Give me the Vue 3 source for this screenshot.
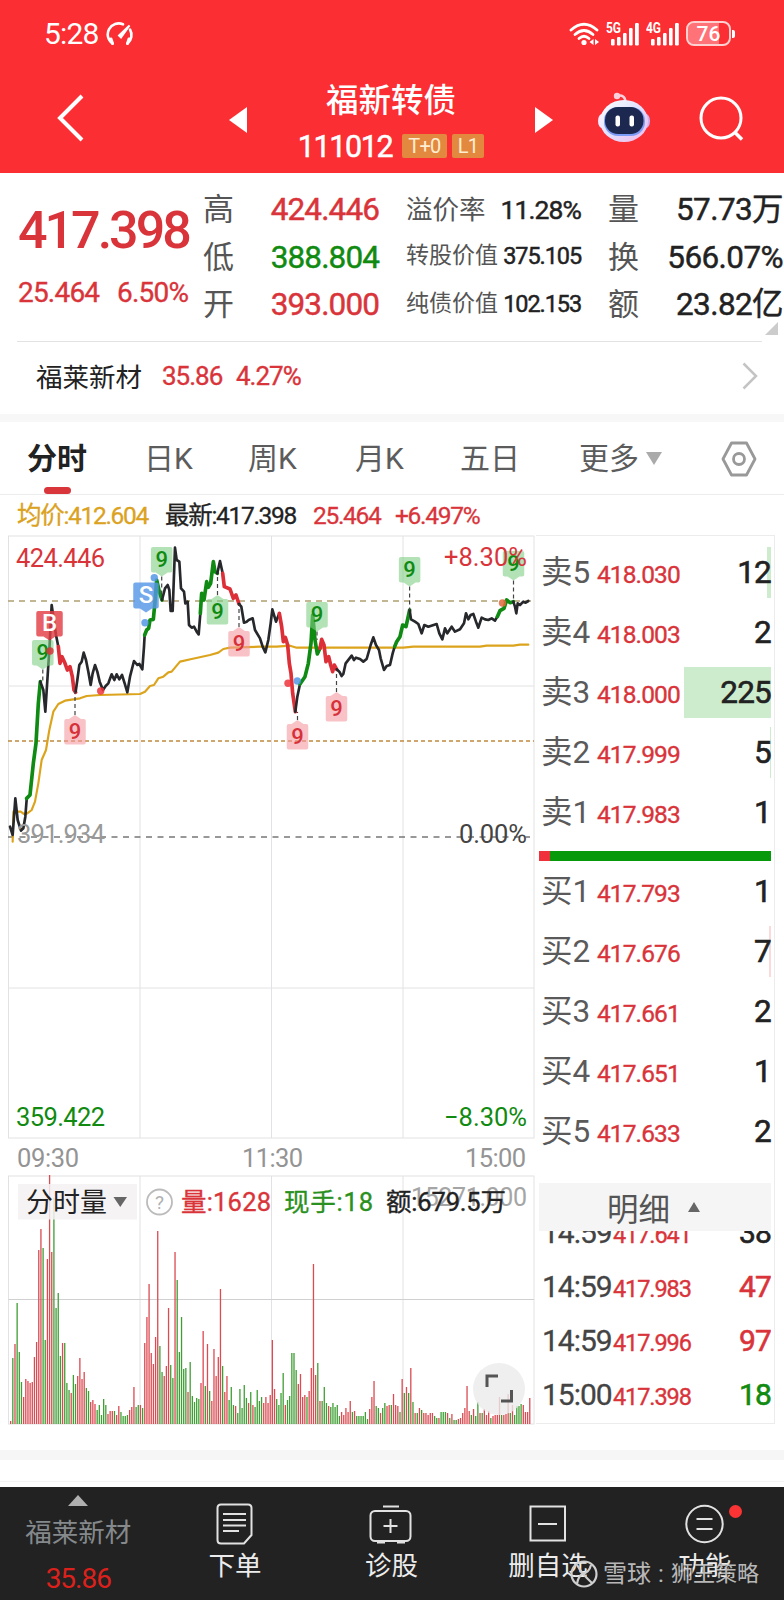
<template>
  <div class="page">
    <header class="header">
      <div class="status">
        <span class="clock">5:28</span>
        <svg class="gauge" viewBox="0 0 28 24" fill="none" stroke="#fff" stroke-width="2.600" stroke-linecap="round">
          <path d="M6.500 21.500 A11 11 0 0 1 17 2.300" />
          <path d="M24 7.500 A11 11 0 0 1 21.500 21.500" />
          <path d="M5 17l1.500 4.500M23 17l-1.500 4.500" stroke-width="3" />
          <path d="M23.500 3.500 L15 15.500 L13 13.500z" fill="#fff" stroke-width="2" />
        </svg>
        <svg class="wifi" viewBox="0 0 30 24" fill="none" stroke="#fff" stroke-width="2.800" stroke-linecap="round">
          <path d="M2 8 Q15 -3.500 28 8" />
          <path d="M6 12.500 Q15 4.500 24 12.500" />
          <path d="M10 16.500 Q15 12 20 16.500" />
          <circle cx="15" cy="20.500" r="2.600" fill="#fff" stroke="none" />
          <path d="M24.500 17l-4 3 4 3zM26 17l4 3-4 3z" fill="#fff" stroke="none" />
        </svg>
        <svg v-for="net in ['5G', '4G']" :key="net" class="signal" viewBox="0 0 34 24" fill="#fff">
          <text x="0" y="11" textLength="15" lengthAdjust="spacingAndGlyphs">{{ net }}</text>
          <rect x="5" y="17" width="3.600" height="6.500" rx="1.200" />
          <rect x="11" y="15" width="3.600" height="8.500" rx="1.200" />
          <rect x="17" y="11" width="3.600" height="12.500" rx="1.200" />
          <rect x="23" y="6" width="3.600" height="17.500" rx="1.200" />
          <rect x="29" y="1" width="3.800" height="22.500" rx="1.200" />
        </svg>
        <span class="battery">76</span>
      </div>
      <div class="titlebar">
        <svg class="back" viewBox="0 0 30 50" fill="none" stroke="#fff" stroke-width="4">
          <path d="M26 3 L4 25 L26 47" />
        </svg>
        <svg class="arrow" viewBox="0 0 18 26" fill="#fff"><path d="M0 13 L18 0 V26z" /></svg>
        <div class="title">
          <div class="name">福新转债</div>
          <div class="code-row">
            <span class="code">111012</span>
            <span class="tag">T+0</span>
            <span class="tag">L1</span>
          </div>
        </div>
        <svg class="arrow" viewBox="0 0 18 26" fill="#fff"><path d="M18 13 L0 0 V26z" /></svg>
        <svg class="robot" viewBox="0 0 54 52">
          <defs>
            <linearGradient id="shell" x1="0" y1="0" x2="1" y2="1">
              <stop offset="0" stop-color="#fff" />
              <stop offset=".5" stop-color="#dfe0ff" />
              <stop offset="1" stop-color="#f3b8e6" />
            </linearGradient>
          </defs>
          <path d="M20 5 Q28 3 28.500 11" fill="none" stroke="#fbd0dc" stroke-width="2.500" />
          <circle cx="20" cy="5" r="3.200" fill="#fbd0dc" />
          <ellipse cx="5" cy="30" rx="4" ry="7" fill="#f6e6ff" />
          <ellipse cx="49" cy="30" rx="4" ry="7" fill="#cdb0f4" />
          <ellipse cx="27" cy="30" rx="24" ry="21" fill="url(#shell)" />
          <rect x="7" y="16" width="41" height="29" rx="14" fill="#7d9cf5" />
          <rect x="8" y="16" width="38.500" height="27" rx="13" fill="#1d2850" />
          <rect x="18.500" y="24.500" width="4.500" height="11" rx="2" fill="#fff" />
          <rect x="32.500" y="24.500" width="4.500" height="11" rx="2" fill="#fff" />
        </svg>
        <svg class="search" viewBox="0 0 46 46" fill="none" stroke="#fff" stroke-width="3">
          <circle cx="22" cy="22" r="20" />
          <path d="M35.500 36 L43 43.500" stroke-width="3.500" />
        </svg>
      </div>
    </header>

    <section class="quote">
      <div class="last">
        <div class="last-price">417.398</div>
        <div class="last-change"><span>25.464</span><span>6.50%</span></div>
      </div>
      <dl class="stats range">
        <template v-for="s in range" :key="s.label">
          <dt>{{ s.label }}</dt>
          <dd :class="s.tone">{{ s.value }}</dd>
        </template>
      </dl>
      <dl class="stats bond">
        <template v-for="(s, i) in bond" :key="s.label">
          <dt :class="{ small: i > 0 }">{{ s.label }}</dt>
          <dd :class="{ small: i > 0 }">{{ s.value }}</dd>
        </template>
      </dl>
      <dl class="stats turnover">
        <template v-for="s in turnover" :key="s.label">
          <dt>{{ s.label }}</dt>
          <dd>{{ s.value }}</dd>
        </template>
      </dl>
      <i class="corner"></i>
    </section>

    <section class="stock">
      <span class="stock-name">福莱新材</span>
      <span class="stock-num">35.86</span>
      <span class="stock-num">4.27%</span>
      <svg class="chevron" viewBox="0 0 16 28" fill="none" stroke="#c4c4c4" stroke-width="2.500">
        <path d="M1.500 1.500 L14 14 L1.500 26.500" />
      </svg>
    </section>

    <nav class="tabs">
      <span v-for="(t, i) in tabs" :key="t" :class="['tab', { active: i === 0 }]">{{ t }}</span>
      <span class="tab more">更多<i class="caret"></i></span>
      <svg class="hex" viewBox="0 0 36 36" fill="none" stroke="#999" stroke-width="2.800" stroke-linejoin="round">
        <path d="M10.500 2 H25.500 L34 18 L25.500 34 H10.500 L2 18z" />
        <circle cx="18" cy="18" r="5.500" />
      </svg>
    </nav>

    <div class="legend">
      <span class="avg">均价:412.604</span>
      <span class="latest">最新:417.398</span>
      <span class="up">25.464</span>
      <span class="up">+6.497%</span>
    </div>

    <main class="board">
      <svg class="chart" viewBox="0 535 536 895">
        <g stroke="#e2e2e4" fill="none">
          <rect x="8.500" y="536" width="525.500" height="602" />
          <rect x="8.500" y="1176" width="525.500" height="248" />
          <path v-for="x in [140, 271.5, 403]" :key="x" :d="`M${x} 536V1138M${x} 1176V1424`" />
          <path d="M8.500 686H534M8.500 988H534" />
          <path d="M8.500 1299.500H534" stroke="#d0d0d2" />
        </g>
        <path d="M8 601H532" stroke="#b0a070" stroke-width="1.400" stroke-dasharray="6 5" />
        <path d="M8 741H534" stroke="#c08a3c" stroke-width="1.600" stroke-dasharray="4 3" />
        <path d="M8 837H530" stroke="#777" stroke-width="1.400" stroke-dasharray="6 5.500" />

        <g transform="translate(0 530) scale(.33333)" fill="none" stroke-linejoin="round" stroke-linecap="round">
          <polyline :points="average" stroke="#dca41c" stroke-width="6.500" />
          <polyline
            v-for="(seg, i) in segments"
            :key="i"
            :points="seg[1]"
            :stroke="lineColor[seg[0]]"
            :stroke-width="seg[0] === 'k' ? 8 : 11"
          />
        </g>

        <g v-for="(m, i) in markers" :key="'m' + i">
          <path :d="m.lead" stroke="#444" stroke-width="1.200" stroke-dasharray="4 3" />
          <path :d="m.shape" :fill="m.fill" :fill-opacity="m.alpha" />
          <text :x="m.x" :y="m.ty" :fill="m.ink" :font-size="m.size" text-anchor="middle" class="mark">{{ m.text }}</text>
        </g>
        <circle v-for="d in dots" :key="d[0]" :cx="d[0]" :cy="d[1]" r="3.700" :fill="d[2]" fill-opacity=".85" />

        <g font-size="25.500" class="axis">
          <text x="16" y="566.500" fill="#d9343a" textLength="89">424.446</text>
          <text x="444" y="566" fill="#d9343a" textLength="83">+8.30%</text>
          <text x="17" y="842.500" fill="#999" textLength="88">391.934</text>
          <text x="459" y="842.500" fill="#444" textLength="68">0.00%</text>
          <text x="16" y="1126" fill="#108a10" textLength="89">359.422</text>
          <text x="444" y="1126" fill="#108a10" textLength="83">−8.30%</text>
          <g fill="#949494">
            <text x="17" y="1167" textLength="62">09:30</text>
            <text x="242" y="1167" textLength="61">11:30</text>
            <text x="465" y="1167" textLength="61">15:00</text>
          </g>
        </g>

        <rect
          v-for="(b, i) in bars"
          :key="'b' + i"
          :x="10 + i * 2.163"
          :y="1424 - b.h"
          width="1.300"
          :height="b.h"
          :fill="b.c === 'r' ? '#dc4a52' : '#3f9f35'"
        />

        <rect x="18" y="1184" width="119" height="35.500" fill="#f5f1f2" fill-opacity=".85" />
        <text x="26" y="1212" font-size="27" fill="#222" textLength="81">分时量</text>
        <path d="M113.500 1197h13.500l-6.750 10z" fill="#666" />
        <circle cx="159.500" cy="1202" r="12.500" fill="none" stroke="#bbb" stroke-width="1.800" />
        <text x="159.500" y="1209" font-size="19" fill="#b0b0b0" text-anchor="middle">?</text>
        <text x="411" y="1206" font-size="25" fill="#a5a5a5" textLength="116">15271.000</text>
        <g font-size="25.500" class="axis">
          <text x="181" y="1211" fill="#d9343a" stroke="#d9343a" textLength="90">量:1628</text>
          <text x="284" y="1211" fill="#2a9020" stroke="#2a9020" textLength="89">现手:18</text>
          <text x="386" y="1211" fill="#222" stroke="#222" textLength="120">额:679.5万</text>
        </g>

        <circle cx="499" cy="1389" r="26" fill="#ebebeb" fill-opacity=".8" />
        <path d="M487 1387V1376H498M501 1401H511.500V1390" fill="none" stroke="#555" stroke-width="3" />
      </svg>

      <aside class="book">
        <div v-for="o in asks" :key="o.label" class="order">
          <i class="depth sell" :style="{ width: o.depth + 'px' }"></i>
          <span class="level">{{ o.label }}</span>
          <span class="price">{{ o.price }}</span>
          <span class="qty">{{ o.qty }}</span>
        </div>
        <div class="ratio"><i></i></div>
        <div v-for="o in bids" :key="o.label" class="order">
          <i class="depth buy" :style="{ width: o.depth + 'px' }"></i>
          <span class="level">{{ o.label }}</span>
          <span class="price">{{ o.price }}</span>
          <span class="qty">{{ o.qty }}</span>
        </div>
        <div class="detail-head">明细<i></i></div>
        <div class="ticks">
          <div v-for="(t, i) in ticks" :key="i" class="tick">
            <span class="time">{{ t.time }}</span>
            <span class="price">{{ t.price }}</span>
            <span :class="['qty', t.tone]">{{ t.qty }}</span>
          </div>
        </div>
      </aside>
    </main>

    <div class="gap"></div>

    <footer class="nav">
      <div class="nav-item linked">
        <i class="nav-caret"></i>
        <span class="linked-name">福莱新材</span>
        <span class="linked-price">35.86</span>
      </div>
      <div class="nav-item">
        <svg viewBox="0 0 44 42">
          <path d="M8 1.500H35Q38.500 1.500 38.500 5V32L31 40.500H8Q4.500 40.500 4.500 37V5Q4.500 1.500 8 1.500z" />
          <path d="M10 11H33M10 17H33M10 22.500H33M10 28H26" />
        </svg>
        <span>下单</span>
      </div>
      <div class="nav-item">
        <svg viewBox="0 0 44 42">
          <rect x="1.500" y="8" width="40" height="30" rx="4.500" />
          <path d="M14 3.500H30M21.500 16V30M14.500 23H28.500M8 39.500H16M28 39.500H36" />
        </svg>
        <span>诊股</span>
      </div>
      <div class="nav-item">
        <svg viewBox="0 0 44 42">
          <rect x="4.500" y="3.500" width="34.500" height="34" />
          <path d="M12 21H31" />
        </svg>
        <span>删自选</span>
      </div>
      <div class="nav-item">
        <svg viewBox="0 0 44 42">
          <circle cx="21.500" cy="21" r="18.200" />
          <path d="M13.500 16H29.500M13.500 26H29.500" />
        </svg>
        <span>功能</span>
        <i class="badge"></i>
      </div>
      <div class="watermark">
        <svg viewBox="0 0 28 28" fill="none" stroke="#cfcfcf" stroke-width="2.200">
          <circle cx="14" cy="14" r="12.500" />
          <path d="M7 5 Q12 14 22 23M21 5 Q19 13 12 14 Q8 17 7 24" />
        </svg>
        <span>雪球</span><span class="colon">:</span><span>狮王策略</span>
      </div>
    </footer>
  </div>
</template>

<script setup>
const range = [
  { label: '高', value: '424.446', tone: 'up' },
  { label: '低', value: '388.804', tone: 'down' },
  { label: '开', value: '393.000', tone: 'up' }
]
const bond = [
  { label: '溢价率', value: '11.28%' },
  { label: '转股价值', value: '375.105' },
  { label: '纯债价值', value: '102.153' }
]
const turnover = [
  { label: '量', value: '57.73万' },
  { label: '换', value: '566.07%' },
  { label: '额', value: '23.82亿' }
]
const tabs = ['分时', '日K', '周K', '月K', '五日']

const asks = [
  { label: '卖5', price: '418.030', qty: 12, depth: 4 },
  { label: '卖4', price: '418.003', qty: 2, depth: 0 },
  { label: '卖3', price: '418.000', qty: 225, depth: 87 },
  { label: '卖2', price: '417.999', qty: 5, depth: 1 },
  { label: '卖1', price: '417.983', qty: 1, depth: 0 }
]
const bids = [
  { label: '买1', price: '417.793', qty: 1, depth: 0 },
  { label: '买2', price: '417.676', qty: 7, depth: 2 },
  { label: '买3', price: '417.661', qty: 2, depth: 0 },
  { label: '买4', price: '417.651', qty: 1, depth: 0 },
  { label: '买5', price: '417.633', qty: 2, depth: 0 }
]
const ticks = [
  { time: '14:59', price: '417.641', qty: 38, tone: '' },
  { time: '14:59', price: '417.983', qty: 47, tone: 'up' },
  { time: '14:59', price: '417.996', qty: 97, tone: 'up' },
  { time: '15:00', price: '417.398', qty: 18, tone: 'down' }
]

// k = plain, g / r = highlighted run
const lineColor = { k: '#26282c', g: '#0f8a12', r: '#dc2f37' }
const segments = [
  ['k', '30,890 38,915 46,805 53,870 63,902 70,895 76,860 80,808'],
  ['g', '80,805 90,795 100,700 108,640 115,520 121,455'],
  ['k', '121,455 130,480 136,545 144,420 148,360 155,225 160,260 168,315 175,350'],
  ['r', '175,350 180,400 186,380 195,400 202,420 210,410 217,440 222,480 227,487'],
  ['k', '227,485 232,450 238,405 245,395 251,368 258,390 265,425 272,465 278,430 285,405 292,425 299,455 309,480 317,468 325,460 335,433 343,450 350,433 358,448 366,435 374,460 382,487 390,440 402,393 412,405 418,402 427,418 432,350 434,315'],
  ['g', '434,315 440,300 446,295 450,270 460,268 465,215 470,150 478,185 486,210'],
  ['k', '486,210 495,175 503,165 508,180 512,243 518,243 525,53 530,90 538,95 543,175 552,185 556,220 563,215 567,285 575,293 582,290 590,305 596,313 601,250'],
  ['g', '601,250 605,190 612,210 620,155 625,172 632,160 640,95 645,125 652,130'],
  ['k', '652,130 660,93 668,130'],
  ['r', '668,130 673,170 690,177 700,205 708,195 717,222'],
  ['k', '717,222 724,230 732,278 740,275 746,270 758,265 765,300 780,325 788,350 796,367 805,330 812,280 817,238 828,275 838,250'],
  ['r', '838,250 845,290 850,335 856,322 863,345 868,400 873,430 878,490 886,545'],
  ['k', '886,545 892,500 900,462'],
  ['g', '900,462 915,440 925,400 933,340 938,255 945,330 952,372 960,355'],
  ['r', '960,355 965,328 972,345 978,395 986,380 992,405 998,425 1003,405 1010,418'],
  ['k', '1010,418 1018,425 1025,438 1030,432 1037,400 1055,377 1062,390 1068,383 1080,387 1090,395 1100,387 1112,345 1120,322 1128,345 1137,360 1142,385 1152,420 1160,408 1170,405 1178,370 1184,350'],
  ['g', '1184,350 1190,335 1200,320 1208,285 1218,290 1229,240'],
  ['k', '1229,240 1233,268 1245,275 1255,282 1265,310 1273,285 1285,290 1310,282 1318,310 1327,328 1335,295 1342,310 1355,290 1365,305 1380,298 1392,280 1398,250 1405,268 1412,255 1420,252 1428,275 1435,293 1445,263 1455,268 1465,270 1475,265 1485,272 1492,260'],
  ['g', '1492,260 1500,242 1512,235 1520,210 1530,218 1540,215'],
  ['k', '1540,215 1545,230 1549,250 1553,220 1560,225 1570,215 1577,218 1585,213']
]
const average = '38,935 40,845 62,845 72,852 82,850 95,840 105,815 115,760 125,690 138,660 148,600 160,545 175,522 195,512 240,505 260,498 300,495 420,492 435,485 450,468 462,465 475,445 490,440 505,427 515,425 540,395 575,387 630,375 655,368 670,357 690,353 780,350 830,350 870,347 890,353 1210,353 1240,350 1440,350 1460,347 1540,347 1560,344 1585,344'

// x, top of the box, which side the pointer sits on, end of the dashed lead
function marker(text, x, top, dir, lead, tone, w = 21.5, h = 25.5) {
  const l = x - w / 2
  const r = x + w / 2
  const bottom = top + h
  const tip = dir === 'down' ? bottom + 4 : top - 4
  const shape = dir === 'down'
    ? `M${l + 2} ${top}H${r - 2}Q${r} ${top} ${r} ${top + 2}V${bottom - 2}Q${r} ${bottom} ${r - 2} ${bottom}H${x + 6}L${x} ${tip}L${x - 6} ${bottom}H${l + 2}Q${l} ${bottom} ${l} ${bottom - 2}V${top + 2}Q${l} ${top} ${l + 2} ${top}z`
    : `M${l + 2} ${bottom}H${r - 2}Q${r} ${bottom} ${r} ${bottom - 2}V${top + 2}Q${r} ${top} ${r - 2} ${top}H${x + 6}L${x} ${tip}L${x - 6} ${top}H${l + 2}Q${l} ${top} ${l} ${top + 2}V${bottom - 2}Q${l} ${bottom} ${l + 2} ${bottom}z`
  const tones = {
    green: { fill: '#7fcf84', alpha: 0.6, ink: '#0f8a12' },
    pink: { fill: '#f59aa0', alpha: 0.6, ink: '#d6303a' },
    buy: { fill: '#e23e46', alpha: 0.82, ink: '#fff' },
    sell: { fill: '#5596e6', alpha: 0.82, ink: '#fff' }
  }
  return {
    text, x, shape, ...tones[tone],
    ty: top + h / 2 + 7.5,
    size: text === '9' ? 22 : 24,
    lead: lead ? `M${x} ${tip}V${lead}` : ''
  }
}
const markers = [
  marker('9', 42.8, 640, 'down', 682, 'green'),
  marker('B', 49.5, 611, 'down', 0, 'buy', 26.5, 25.5),
  marker('9', 75, 719, 'up', 692, 'pink'),
  marker('9', 161.7, 547, 'down', 598, 'green'),
  marker('S', 146, 582.5, 'down', 0, 'sell', 25.5, 26),
  marker('9', 217.5, 599, 'up', 574, 'green'),
  marker('9', 239, 631, 'up', 604, 'pink'),
  marker('9', 297.5, 724, 'up', 712, 'pink'),
  marker('9', 336.5, 696, 'up', 672, 'pink'),
  marker('9', 317, 602, 'down', 640, 'green'),
  marker('9', 409.6, 557, 'down', 610, 'green'),
  marker('9', 513.5, 551, 'down', 601, 'green')
]
const dots = [
  [50, 651, '#d9343a'],
  [100.7, 691, '#ee343c'],
  [145, 622.7, '#5596e6'],
  [154.3, 577.7, '#5596e6'],
  [288, 683.3, '#ee343c'],
  [297.3, 681, '#5596e6'],
  [502.5, 603, '#e0683c']
]

const volume =
  'r3 g66 r80 g121 g72 g42 r27 r45 r43 r41 r42 r67 r82 r174 r195 g176 g84 r165 r249 r172 g226 g116 g131 g68 r81 g81 g41 g34 r31 g49 ' +
  'g40 r48 r66 r45 r52 g36 g33 r22 r24 r20 g14 g19 g9 g25 g19 r10 r13 r13 g13 r9 r18 g12 g8 g8 g9 r14 r17 r37 g17 g19 ' +
  'r19 g16 r81 r107 r140 r71 r60 r87 r193 g78 g52 r48 r58 r116 g59 g46 r172 g144 g72 g107 g55 g56 r32 g62 g28 g22 g26 g25 r41 r93 ' +
  'g38 r80 g33 r23 r75 r48 r67 r135 g58 r32 r48 g24 g37 g19 r18 g11 g35 g16 g39 g26 r21 g32 r19 g17 g34 g23 g27 r21 r27 r21 ' +
  'r29 r84 r35 g25 g19 g31 g51 r19 g24 g28 g71 g71 g54 r40 r50 r27 r29 g27 r33 r56 r160 r49 g61 r23 g23 g37 g21 r18 g17 g21 ' +
  'g17 g19 g8 r12 r9 r16 r12 r23 g12 r13 g8 g8 g8 g8 g12 g5 r15 r27 r43 g18 g16 r11 g16 g21 r18 r19 g19 r30 r19 r18 ' +
  'g12 r45 g31 r37 g31 r56 g22 r11 g11 r16 g14 r11 r11 r9 r11 r11 g8 g6 r6 g12 g12 g12 r11 g6 r10 g4 g4 r5 r6 r11 ' +
  'r16 r38 r13 g9 r15 g8 g22 r11 g11 r15 r9 r13 g6 r8 r9 r9 r27 g9 r9 r10 r30 g11 r19 g9 g18 g18 g20 r19 r12 r12 r26'
const bars = volume.split(' ').map(v => ({ c: v[0], h: Number(v.slice(1)) }))
</script>

<style>
body {
  margin: 0;
  background: #fff;
}
</style>

<style scoped>
.page {
  width: 784px;
  height: 1600px;
  display: flex;
  flex-direction: column;
  overflow: hidden;
  background: #fff;
  font-family: Roboto, "Noto Sans CJK SC", sans-serif;
  color: #222;
}

.page > * {
  flex: none;
  box-sizing: border-box;
}

svg {
  display: block;
}

.up {
  color: #d9343a;
}

.down {
  color: #108a10;
}

/* header */
.header {
  height: 173px;
  background: #fa2e33;
  color: #fff;
}

.status {
  height: 67px;
  display: flex;
  align-items: center;
  box-sizing: border-box;
  padding-left: 44px;
}

.clock {
  width: 62px;
  font-size: 30px;
  letter-spacing: -0.8px;
}

.gauge {
  width: 28px;
  height: 24px;
}

.wifi {
  width: 30px;
  height: 24px;
  margin-left: 435px;
  margin-right: 7px;
}

.signal {
  width: 34px;
  height: 24px;
  margin-right: 6px;
}

.signal text {
  font-size: 14px;
  font-weight: 700;
}

.battery {
  position: relative;
  width: 41px;
  height: 21px;
  border: 2px solid #ffd0d0;
  border-radius: 8px;
  background: linear-gradient(90deg, #ff7378 76%, transparent 76%);
  background-clip: content-box;
  font-size: 21px;
  font-weight: 500;
  line-height: 22px;
  text-align: center;
}

.battery::after {
  content: "";
  position: absolute;
  right: -6px;
  top: 7px;
  width: 3px;
  height: 8px;
  border-radius: 0 2px 2px 0;
  background: #fff;
}

.titlebar {
  height: 106px;
  display: flex;
  align-items: flex-start;
  padding-left: 56px;
}

.back {
  width: 30px;
  height: 50px;
  margin-top: 26px;
}

.arrow {
  width: 18px;
  height: 26px;
  margin-top: 40px;
}

.back + .arrow {
  margin-left: 143px;
}

.title {
  width: 288px;
  padding-top: 14px;
  display: flex;
  flex-direction: column;
  align-items: center;
}

.name {
  font-size: 32.5px;
  font-weight: 500;
  line-height: 40px;
}

.code-row {
  display: flex;
  align-items: center;
  height: 24px;
  margin-top: 13px;
  gap: 5px;
}

.code {
  font-size: 30.5px;
  -webkit-text-stroke: 0.5px;
  letter-spacing: -1.4px;
  margin-right: 5px;
}

.tag {
  padding: 0 6px;
  height: 24px;
  line-height: 25px;
  font-size: 20px;
  letter-spacing: -0.7px;
  background: #e3893f;
  color: #ffeed2;
  border-radius: 2px;
}

.robot {
  width: 54px;
  height: 52px;
  margin-left: 44px;
  margin-top: 24px;
}

.search {
  width: 46px;
  height: 46px;
  margin-left: 48px;
  margin-top: 29px;
}

/* quote */
.quote {
  position: relative;
  height: 169px;
  padding-top: 13px;
  display: flex;
}

.last {
  width: 203px;
  padding-left: 18px;
  box-sizing: border-box;
  color: #d9343a;
}

.last-price {
  margin-top: 15px;
  font-size: 52px;
  line-height: 60px;
  font-weight: 500;
  letter-spacing: -3px;
}

.last-change {
  display: grid;
  grid-template-columns: 99px auto;
  margin-top: 14px;
  font-size: 28px;
  line-height: 36px;
  letter-spacing: -0.8px;
  -webkit-text-stroke: 0.35px;
}

.stats {
  display: grid;
  grid-template-rows: repeat(3, 47.5px);
  align-items: center;
  margin: 0;
  line-height: 47px;
  white-space: nowrap;
}

.stats dt {
  color: #555;
  font-size: 31px;
}

.stats dd {
  margin: 0;
  text-align: right;
  font-size: 31.5px;
  letter-spacing: -0.9px;
  -webkit-text-stroke: 0.45px;
}

.range {
  width: 176px;
  grid-template-columns: 32px 1fr;
}

.bond {
  margin-left: 27px;
  width: 175px;
  grid-template-columns: 80px 1fr;
}

.bond dt {
  font-size: 26.5px;
}

.bond dd {
  font-size: 26.5px;
  letter-spacing: -0.9px;
}

.bond dt.small {
  font-size: 23px;
  line-height: 44px;
  padding-bottom: 2px;
}

.bond dd.small {
  font-size: 23.5px;
  line-height: 44px;
  padding-bottom: 2px;
  letter-spacing: -1.1px;
}

.turnover {
  margin-left: 27px;
  width: 175px;
  grid-template-columns: 32px 1fr;
}

.turnover dd {
  letter-spacing: -0.6px;
}

.corner {
  position: absolute;
  right: 6px;
  bottom: 7px;
  border-left: 13px solid transparent;
  border-bottom: 13px solid #ccc;
}

.quote::after {
  content: "";
  position: absolute;
  left: 17px;
  right: 22px;
  bottom: 0;
  height: 1px;
  background: #e2e2e2;
}

/* linked stock */
.stock {
  height: 80px;
  border-bottom: 8px solid #f7f7f7;
  padding: 0 26px 5px 36px;
  display: flex;
  align-items: center;
}

.stock-name {
  width: 126px;
  font-size: 26.5px;
}

.stock-num {
  width: 74px;
  font-size: 26px;
  letter-spacing: -1px;
  color: #d9343a;
  -webkit-text-stroke: 0.35px;
}

.chevron {
  width: 16px;
  height: 28px;
  margin-left: auto;
}

/* tabs */
.tabs {
  height: 73px;
  padding-left: 27px;
  display: grid;
  grid-template-columns: 117px 104px 107px 105px 119px 142px 36px;
  align-items: center;
  border-bottom: 1px solid #ececec;
}

.tab {
  position: relative;
  font-size: 30px;
  line-height: 72px;
  padding-top: 1px;
  height: 71px;
  color: #5c5c5c;
}

.tab.active {
  font-weight: 700;
  color: #222;
}

.tab.active::after {
  content: "";
  position: absolute;
  left: 17px;
  bottom: 0;
  width: 27px;
  height: 7px;
  border-radius: 4px;
  background: #d9363b;
}

.caret {
  display: inline-block;
  margin-left: 7px;
  vertical-align: 4px;
  border: 8px solid transparent;
  border-top: 13px solid #aaa;
  border-bottom: 0;
}

.hex {
  width: 36px;
  height: 36px;
  margin-top: 1px;
}

.legend {
  height: 40px;
  padding: 2px 0 0 17px;
  display: grid;
  grid-template-columns: 148px 148px 82px auto;
  align-items: center;
  line-height: 38px;
  font-size: 24.5px;
  letter-spacing: -1.3px;
  white-space: nowrap;
  -webkit-text-stroke: 0.3px;
}

.avg {
  color: #dba21f;
}

/* board */
.board {
  height: 895px;
  display: flex;
}

.chart {
  width: 536px;
  height: 895px;
  flex: none;
}

.mark {
  stroke: currentColor;
  stroke-width: 0;
  font-weight: 500;
}

.axis text {
  stroke-width: 0.35px;
}

.book {
  width: 239px;
  height: 889px;
  padding: 8px 3px 0 3px;
  box-sizing: border-box;
  border-top: 1px solid #ececec;
  border-right: 1px solid #ececec;
  border-bottom: 1px solid #ececec;
  display: flex;
  flex-direction: column;
}

.order {
  position: relative;
  flex: none;
  height: 60px;
  display: flex;
  align-items: baseline;
  line-height: 57px;
}

.depth {
  position: absolute;
  right: 0;
  top: 3px;
  height: 51px;
}

.depth.sell {
  background: #cdeccd;
}

.depth.buy {
  background: #fbdada;
}

.level,
.order .price,
.order .qty {
  position: relative;
}

.level {
  width: 58px;
  padding-left: 2px;
  box-sizing: border-box;
  font-size: 31.5px;
  color: #5a5a5a;
}

.price {
  font-size: 24.5px;
  letter-spacing: -0.9px;
  color: #d9343a;
  -webkit-text-stroke: 0.35px;
}

.qty {
  margin-left: auto;
  font-size: 31.5px;
  letter-spacing: -0.8px;
  -webkit-text-stroke: 0.6px;
}

.ratio {
  flex: none;
  height: 10px;
  margin: 7px 0 2px;
  background: #069a0b;
}

.ratio i {
  display: block;
  width: 11px;
  height: 10px;
  background: #f0303a;
}

.detail-head {
  flex: none;
  height: 48px;
  margin-top: 20px;
  padding-left: 68px;
  display: flex;
  align-items: center;
  background: #f5f5f5;
  font-size: 31.5px;
  color: #555;
}

.detail-head i {
  margin-left: 18px;
  border: 6px solid transparent;
  border-bottom: 10px solid #666;
  border-top: 0;
}

.ticks {
  height: 192px;
  padding-bottom: 2px;
  box-sizing: border-box;
  overflow: hidden;
  display: flex;
  flex-direction: column;
  justify-content: flex-end;
}

.tick {
  flex: none;
  height: 54px;
  display: flex;
  align-items: baseline;
  line-height: 56px;
}

.time {
  width: 74px;
  padding-left: 3px;
  box-sizing: border-box;
  font-size: 30px;
  letter-spacing: -1px;
  color: #444;
  -webkit-text-stroke: 0.3px;
}

.tick .price {
  font-size: 23.5px;
  letter-spacing: -1.1px;
}

.ticks .qty {
  font-size: 30px;
}

.qty.up {
  color: #d9343a;
}

.qty.down {
  color: #108a10;
}

.gap {
  height: 57px;
  background: linear-gradient(#fff 20px, #f6f6f6 20px, #f6f6f6 30px, #fff 30px, #fff 51px, #f4f4f4 51px, #f4f4f4 52px, #fff 52px);
}

/* bottom nav */
.nav {
  position: relative;
  height: 113px;
  display: grid;
  grid-template-columns: repeat(5, 156.6px);
  background: #222;
  color: #ececec;
}

.nav-item {
  position: relative;
  padding-top: 16px;
  display: flex;
  flex-direction: column;
  align-items: center;
  font-size: 26.5px;
  line-height: 42px;
}

.nav-item svg {
  width: 44px;
  height: 42px;
  fill: none;
  stroke: #e2e2e2;
  stroke-width: 2;
}

.linked {
  padding-top: 8px;
  line-height: 40px;
}

.nav-caret {
  border: 10px solid transparent;
  border-bottom: 11px solid #b0b0b0;
  border-top: 0;
}

.linked-name {
  margin-top: 7px;
  color: #85898c;
}

.linked-price {
  margin-top: 6px;
  font-size: 28px;
  letter-spacing: -1px;
  color: #dc211c;
}

.badge {
  position: absolute;
  left: 103px;
  top: 18px;
  width: 13px;
  height: 13px;
  border-radius: 50%;
  background: #fa3434;
}

.watermark {
  position: absolute;
  left: 570px;
  top: 70px;
  display: flex;
  align-items: center;
  font-size: 22px;
  line-height: 34px;
  color: rgba(225, 225, 225, 0.8);
  text-shadow: 1px 1px 1px #222;
}

.watermark svg {
  width: 28px;
  height: 28px;
  margin-right: 5px;
}

.watermark span {
  font-size: 24px;
}

.watermark .colon {
  width: 20px;
  text-align: center;
}

.watermark span:last-child {
  font-size: 22px;
}
</style>
